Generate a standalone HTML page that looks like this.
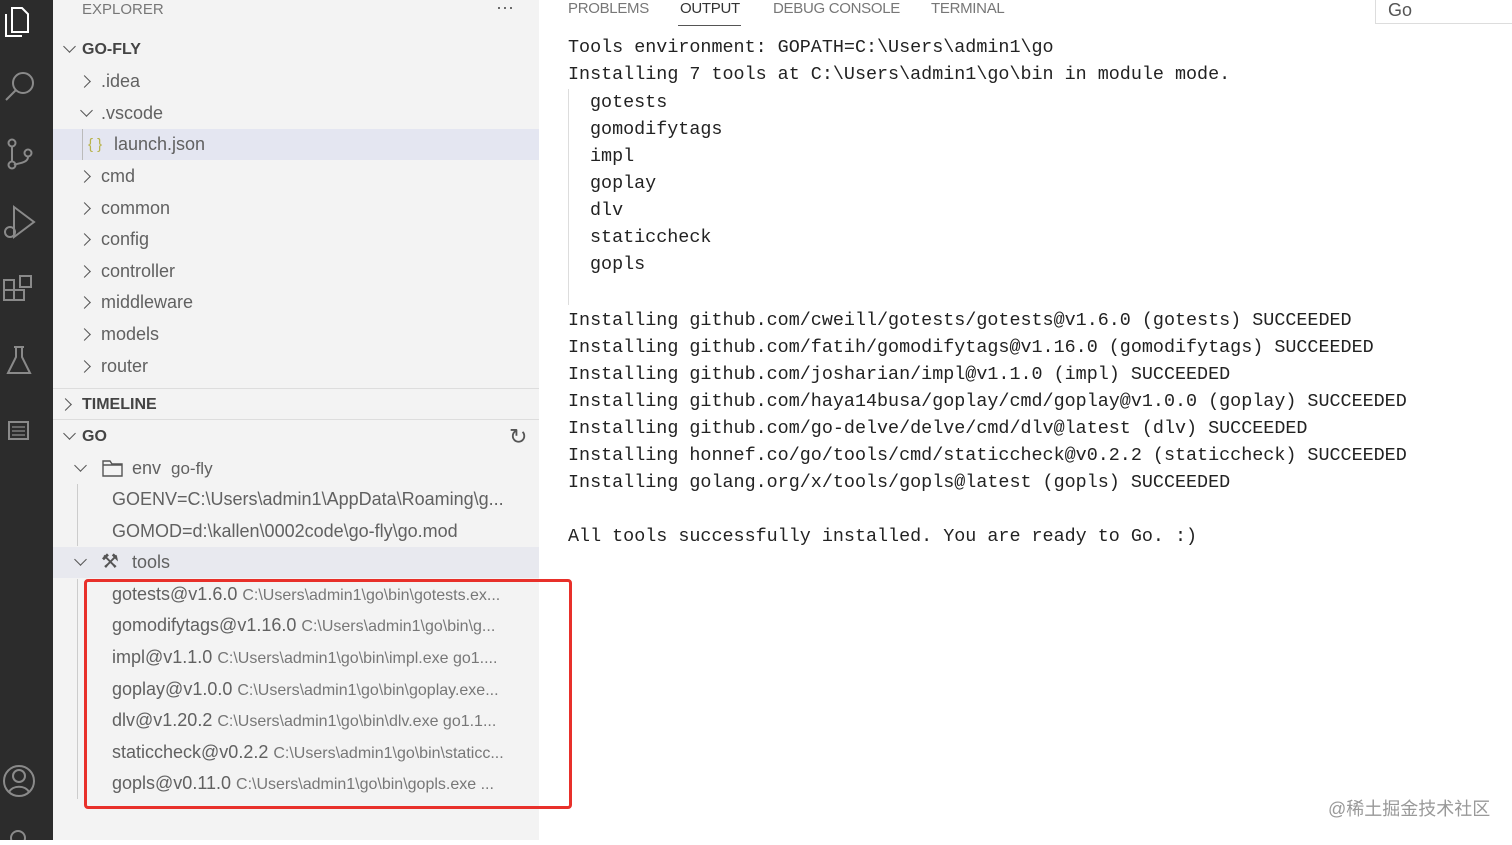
<!DOCTYPE html>
<html><head><meta charset="utf-8"><style>
*{margin:0;padding:0;box-sizing:border-box}
body{width:1512px;height:840px;overflow:hidden;background:#fff;font-family:"Liberation Sans",sans-serif;position:relative}
#act{position:absolute;left:0;top:0;width:53px;height:840px;background:#2c2c2c}
#side{position:absolute;left:53px;top:0;width:486px;height:840px;background:#f3f3f3;color:#616161}
.r{position:absolute;left:0;width:486px;height:31px;line-height:31px;font-size:18px;white-space:nowrap;color:#616161}
.h{font-weight:bold;font-size:16px;color:#444}
.chev{position:absolute;width:9px;height:9px;border-right:1.6px solid #555;border-bottom:1.6px solid #555}
.cr{transform:rotate(-45deg)}
.cd{transform:rotate(45deg)}
.d{font-size:16px;color:#777}
.out{position:absolute;left:568px;font-family:"Liberation Mono",monospace;font-size:18.4px;color:#222;white-space:pre;line-height:27px}
.tab{position:absolute;top:0;font-size:15px;color:#777;letter-spacing:-0.3px}
.sep{position:absolute;left:0;width:486px;height:1px;background:#ddd}
</style></head><body>
<div id="act">
<svg width="53" height="840" fill="none" stroke="#8a8a8a" stroke-width="2">
<path d="M12 8h10l6 6v18H12z M6 14v22h16" stroke="#fff"/>
<circle cx="23" cy="83" r="10"/><path d="M16 90l-10 10"/>
<circle cx="12" cy="143" r="3.5"/><circle cx="12" cy="165" r="3.5"/><circle cx="28" cy="153" r="3.5"/><path d="M12 147v14 M28 157c0 6-10 6-14 8"/>
<path d="M14 207l20 15-20 15z"/><circle cx="10" cy="232" r="5"/>
<rect x="4" y="290" width="10" height="10"/><rect x="14" y="290" width="10" height="10"/><rect x="4" y="280" width="10" height="10"/><rect x="20" y="276" width="11" height="11"/>
<path d="M14 347h10 M16 347v10l-8 16h22l-8-16v-10"/>
<rect x="9" y="422" width="19" height="17"/><path d="M12 427h13 M12 431h13 M12 435h13" stroke-width="1.2"/>
<circle cx="19" cy="781" r="15"/><circle cx="19" cy="776" r="6"/><path d="M9 792c4-7 16-7 20 0"/>
<circle cx="18" cy="838" r="7"/>
</svg>
</div>
<div id="side">
<div class="r" style="top:-6px;left:29px;font-size:15px;color:#777">EXPLORER</div>
<div class="r" style="top:-8px;left:443px;font-size:18px;color:#555">···</div>
<div class="r h" style="top:34px"><span class="chev cd" style="left:12px;top:8px"></span><span style="position:absolute;left:29px">GO-FLY</span></div>
<div class="r" style="top:66px"><span class="chev cr" style="left:27px;top:11px"></span><span style="position:absolute;left:48px">.idea</span></div>
<div class="r" style="top:98px"><span class="chev cd" style="left:29px;top:8px"></span><span style="position:absolute;left:48px">.vscode</span></div>
<div class="r" style="top:129px;background:#e4e6f1"><span style="position:absolute;left:29px;top:0;width:1px;height:31px;background:#bbb"></span><span style="position:absolute;left:35px;color:#b8b34a;font-size:15px">{ }</span><span style="position:absolute;left:61px">launch.json</span></div>
<div class="r" style="top:161px"><span class="chev cr" style="left:27px;top:11px"></span><span style="position:absolute;left:48px">cmd</span></div>
<div class="r" style="top:193px"><span class="chev cr" style="left:27px;top:11px"></span><span style="position:absolute;left:48px">common</span></div>
<div class="r" style="top:224px"><span class="chev cr" style="left:27px;top:11px"></span><span style="position:absolute;left:48px">config</span></div>
<div class="r" style="top:256px"><span class="chev cr" style="left:27px;top:11px"></span><span style="position:absolute;left:48px">controller</span></div>
<div class="r" style="top:287px"><span class="chev cr" style="left:27px;top:11px"></span><span style="position:absolute;left:48px">middleware</span></div>
<div class="r" style="top:319px"><span class="chev cr" style="left:27px;top:11px"></span><span style="position:absolute;left:48px">models</span></div>
<div class="r" style="top:351px"><span class="chev cr" style="left:27px;top:11px"></span><span style="position:absolute;left:48px">router</span></div>
<div class="sep" style="top:388px"></div>
<div class="r h" style="top:389px"><span class="chev cr" style="left:8px;top:11px"></span><span style="position:absolute;left:29px">TIMELINE</span></div>
<div class="sep" style="top:419px"></div>
<div class="r h" style="top:421px"><span class="chev cd" style="left:12px;top:8px"></span><span style="position:absolute;left:29px">GO</span><span style="position:absolute;left:456px;font-size:22px;font-weight:normal;color:#555">↻</span></div>
<div class="r" style="top:453px"><span class="chev cd" style="left:23px;top:8px"></span><svg style="position:absolute;left:49px;top:7px" width="21" height="17" fill="none" stroke="#555" stroke-width="1.4"><path d="M1 1h7l2 3h10v12H1z M1 5h19"/></svg><span style="position:absolute;left:79px">env</span><span style="position:absolute;left:118px;font-size:17px">go-fly</span></div>
<div style="position:absolute;left:24px;top:484px;width:1px;height:62px;background:#ccc"></div>
<div class="r" style="top:484px"><span style="position:absolute;left:59px">GOENV=C:\Users\admin1\AppData\Roaming\g...</span></div>
<div class="r" style="top:516px"><span style="position:absolute;left:59px">GOMOD=d:\kallen\0002code\go-fly\go.mod</span></div>
<div class="r" style="top:547px;background:#e8e9ef"><span class="chev cd" style="left:23px;top:8px"></span><span style="position:absolute;left:48px;font-size:20px;color:#555">⚒</span><span style="position:absolute;left:79px">tools</span></div>
<div style="position:absolute;left:24px;top:579px;width:1px;height:220px;background:#ccc"></div>
<div class="r" style="top:579px"><span style="position:absolute;left:59px">gotests@v1.6.0 <span class="d">C:\Users\admin1\go\bin\gotests.ex...</span></span></div>
<div class="r" style="top:610px"><span style="position:absolute;left:59px">gomodifytags@v1.16.0 <span class="d">C:\Users\admin1\go\bin\g...</span></span></div>
<div class="r" style="top:642px"><span style="position:absolute;left:59px">impl@v1.1.0 <span class="d">C:\Users\admin1\go\bin\impl.exe go1....</span></span></div>
<div class="r" style="top:674px"><span style="position:absolute;left:59px">goplay@v1.0.0 <span class="d">C:\Users\admin1\go\bin\goplay.exe...</span></span></div>
<div class="r" style="top:705px"><span style="position:absolute;left:59px">dlv@v1.20.2 <span class="d">C:\Users\admin1\go\bin\dlv.exe go1.1...</span></span></div>
<div class="r" style="top:737px"><span style="position:absolute;left:59px">staticcheck@v0.2.2 <span class="d">C:\Users\admin1\go\bin\staticc...</span></span></div>
<div class="r" style="top:768px"><span style="position:absolute;left:59px">gopls@v0.11.0 <span class="d">C:\Users\admin1\go\bin\gopls.exe ...</span></span></div>
</div>
<div style="position:absolute;left:84px;top:579px;width:488px;height:230px;border:3px solid #e8302a;border-radius:4px"></div>
<div class="tab" style="left:568px">PROBLEMS</div>
<div class="tab" style="left:680px;color:#333">OUTPUT</div>
<div style="position:absolute;left:678px;top:25px;width:63px;height:1px;background:#555"></div>
<div class="tab" style="left:773px">DEBUG CONSOLE</div>
<div class="tab" style="left:931px">TERMINAL</div>
<div style="position:absolute;left:1375px;top:-2px;width:140px;height:26px;border:1px solid #ddd;font-size:18px;color:#555;padding-left:12px;line-height:22px">Go</div>
<div class="out" style="top:34px">Tools environment: GOPATH=C:\Users\admin1\go
Installing 7 tools at C:\Users\admin1\go\bin in module mode.</div>
<div style="position:absolute;left:568px;top:89px;width:1px;height:216px;background:#ddd"></div>
<div class="out" style="top:89px;left:590px">gotests
gomodifytags
impl
goplay
dlv
staticcheck
gopls</div>
<div class="out" style="top:307px">Installing github.com/cweill/gotests/gotests@v1.6.0 (gotests) SUCCEEDED
Installing github.com/fatih/gomodifytags@v1.16.0 (gomodifytags) SUCCEEDED
Installing github.com/josharian/impl@v1.1.0 (impl) SUCCEEDED
Installing github.com/haya14busa/goplay/cmd/goplay@v1.0.0 (goplay) SUCCEEDED
Installing github.com/go-delve/delve/cmd/dlv@latest (dlv) SUCCEEDED
Installing honnef.co/go/tools/cmd/staticcheck@v0.2.2 (staticcheck) SUCCEEDED
Installing golang.org/x/tools/gopls@latest (gopls) SUCCEEDED

All tools successfully installed. You are ready to Go. :)</div>
<div style="position:absolute;left:1328px;top:795px;font-size:18px;color:#999;font-family:'Liberation Sans','Noto Sans CJK SC',sans-serif">@稀土掘金技术社区</div>
</body></html>
